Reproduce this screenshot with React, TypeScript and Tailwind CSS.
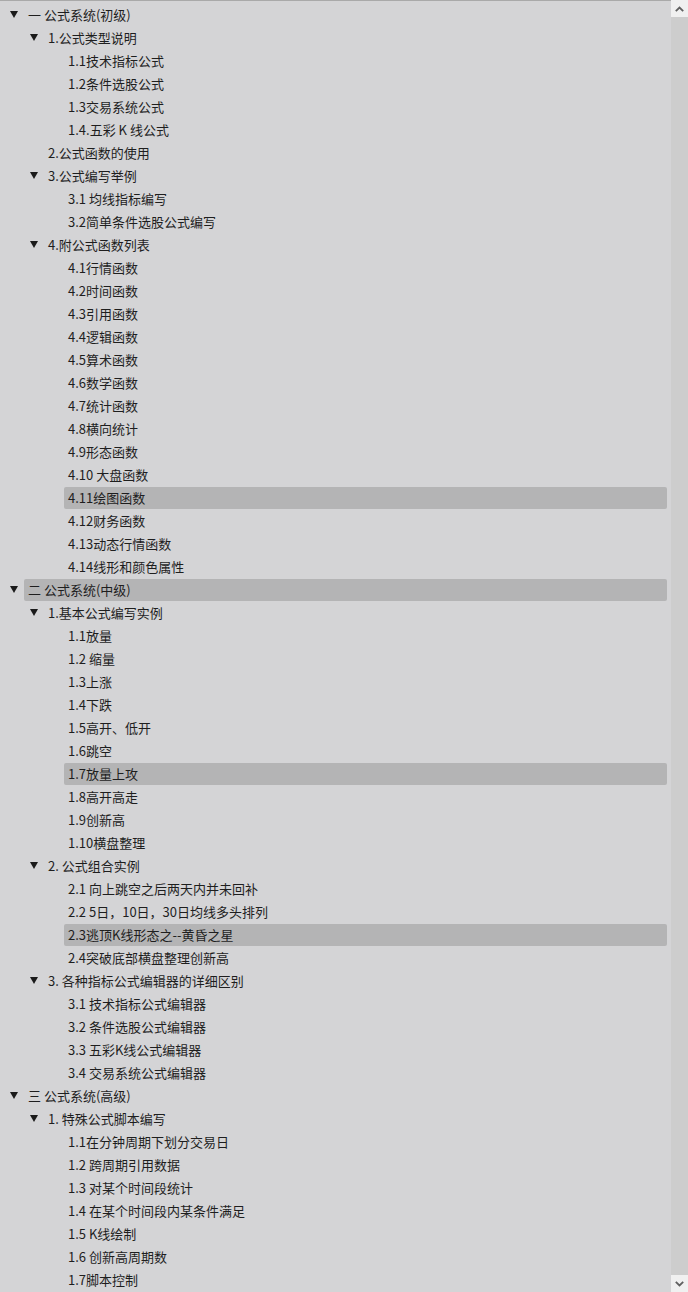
import React from 'react'

type Node = {
  label: string
  children?: Node[]
  selected?: boolean
}

const leaves = (labels: string[], selected?: string): Node[] =>
  labels.map((label) => ({ label, selected: label === selected }))

const tree: Node[] = [
  {
    label: '一 公式系统(初级)',
    children: [
      {
        label: '1.公式类型说明',
        children: leaves(['1.1技术指标公式', '1.2条件选股公式', '1.3交易系统公式', '1.4.五彩 K 线公式']),
      },
      { label: '2.公式函数的使用' },
      {
        label: '3.公式编写举例',
        children: leaves(['3.1 均线指标编写', '3.2简单条件选股公式编写']),
      },
      {
        label: '4.附公式函数列表',
        children: leaves(
          [
            '4.1行情函数',
            '4.2时间函数',
            '4.3引用函数',
            '4.4逻辑函数',
            '4.5算术函数',
            '4.6数学函数',
            '4.7统计函数',
            '4.8横向统计',
            '4.9形态函数',
            '4.10 大盘函数',
            '4.11绘图函数',
            '4.12财务函数',
            '4.13动态行情函数',
            '4.14线形和颜色属性',
          ],
          '4.11绘图函数'
        ),
      },
    ],
  },
  {
    label: '二 公式系统(中级)',
    selected: true,
    children: [
      {
        label: '1.基本公式编写实例',
        children: leaves(
          ['1.1放量', '1.2 缩量', '1.3上涨', '1.4下跌', '1.5高开、低开', '1.6跳空', '1.7放量上攻', '1.8高开高走', '1.9创新高', '1.10横盘整理'],
          '1.7放量上攻'
        ),
      },
      {
        label: '2. 公式组合实例',
        children: leaves(
          ['2.1 向上跳空之后两天内并未回补', '2.2 5日，10日，30日均线多头排列', '2.3逃顶K线形态之--黄昏之星', '2.4突破底部横盘整理创新高'],
          '2.3逃顶K线形态之--黄昏之星'
        ),
      },
      {
        label: '3. 各种指标公式编辑器的详细区别',
        children: leaves(['3.1 技术指标公式编辑器', '3.2 条件选股公式编辑器', '3.3 五彩K线公式编辑器', '3.4 交易系统公式编辑器']),
      },
    ],
  },
  {
    label: '三 公式系统(高级)',
    children: [
      {
        label: '1. 特殊公式脚本编写',
        children: leaves([
          '1.1在分钟周期下划分交易日',
          '1.2 跨周期引用数据',
          '1.3 对某个时间段统计',
          '1.4 在某个时间段内某条件满足',
          '1.5 K线绘制',
          '1.6 创新高周期数',
          '1.7脚本控制',
        ]),
      },
    ],
  },
]

const indent = ['w-0', 'w-5', 'w-10']

const Caret = () => (
  <svg width="8" height="7" viewBox="0 0 8 7" className="fill-[#1a1a1a]">
    <path d="M0 0H8L4 7Z" />
  </svg>
)

const TreeRow: React.FC<{ node: Node; level: number }> = ({ node, level }) => (
  <>
    <div className="flex h-[23px] items-center pr-1">
      <div className={`${indent[level]} shrink-0`} />
      <div className="flex w-6 shrink-0 items-center justify-center pl-1">
        {node.children && <Caret />}
      </div>
      <div
        className={`flex h-[22px] flex-1 items-center rounded-[2px] px-1 ${
          node.selected ? 'bg-[#b4b4b5]' : ''
        }`}
      >
        <span className="whitespace-nowrap">{node.label}</span>
      </div>
    </div>
    {node.children?.map((child, i) => (
      <TreeRow key={i} node={child} level={level + 1} />
    ))}
  </>
)

const Chevron: React.FC<{ up?: boolean }> = ({ up }) => (
  <svg width="9" height="6" viewBox="0 0 9 6" className={up ? '' : 'rotate-180'}>
    <path d="M0.8 5.2L4.5 1.5L8.2 5.2" fill="none" stroke="#606060" strokeWidth="1.8" />
  </svg>
)

export default function App() {
  return (
    <div
      className="flex h-[1292px] w-[688px] overflow-hidden bg-[#d4d4d6] text-[13px] text-[#1e1e1e]"
      style={{ fontFamily: '"Noto Sans CJK SC", "Noto Sans", sans-serif' }}
    >
      <div className="flex-1 border-t border-[#a9a9a9] pt-[2px]">
        {tree.map((node, i) => (
          <TreeRow key={i} node={node} level={0} />
        ))}
      </div>
      <div className="flex w-[17px] shrink-0 flex-col bg-[#cdcdcd]">
        <div className="flex h-[17px] items-center justify-center bg-[#f0f0f0]">
          <Chevron up />
        </div>
        <div className="flex-1" />
        <div className="flex h-[17px] items-center justify-center bg-[#f0f0f0]">
          <Chevron />
        </div>
      </div>
    </div>
  )
}
